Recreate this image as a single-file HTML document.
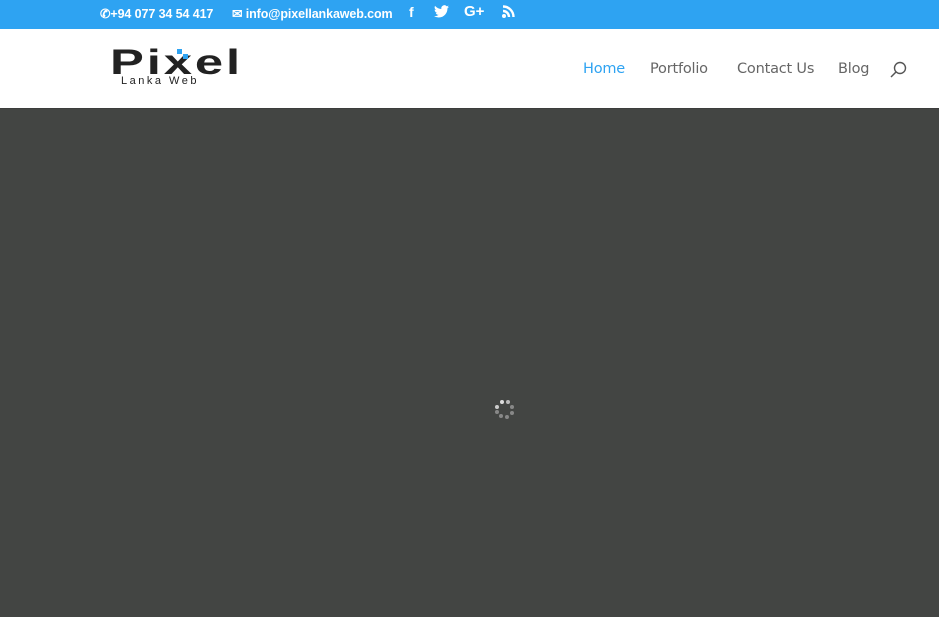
<!DOCTYPE html>
<html><head><meta charset="utf-8"><style>
body{margin:0;width:939px;height:617px;overflow:hidden;background:#434543;font-family:"Liberation Sans",sans-serif}
#top{position:absolute;left:0;top:0;width:939px;height:29px;background:#2ea3f2;color:#fff;font-size:12.5px;font-weight:bold;letter-spacing:-0.1px}
#top span{position:absolute;top:6px}
#hdr{position:absolute;left:0;top:29px;width:939px;height:79px;background:#fff;box-shadow:0 1px 0 rgba(0,0,0,.1)}
.nav{position:absolute;top:32px;font-size:14.5px;color:#666;font-family:"DejaVu Sans","Liberation Sans",sans-serif;letter-spacing:-0.2px}
.dot{position:absolute;width:4px;height:4px;border-radius:2px;background:#888}
</style></head><body>
<div id="top">
<span style="left:100px">&#9990;+94 077 34 54 417</span>
<span style="left:232px">&#9993; info@pixellankaweb.com</span>
<span style="left:409px;font-size:14px;top:4px">f</span>
<span style="left:434px;top:5px"><svg width="15" height="13" viewBox="0 0 24 20"><path fill="#fff" d="M24 2.4a10 10 0 0 1-2.8.8A5 5 0 0 0 23.3.4a10 10 0 0 1-3.1 1.2A4.9 4.9 0 0 0 11.8 6 14 14 0 0 1 1.7.9a4.9 4.9 0 0 0 1.5 6.6 4.9 4.9 0 0 1-2.2-.6 4.9 4.9 0 0 0 3.9 4.9 4.9 4.9 0 0 1-2.2.1 4.9 4.9 0 0 0 4.6 3.4A9.9 9.9 0 0 1 0 17.3 14 14 0 0 0 7.5 19.5c9 0 14-7.5 14-14v-.6A10 10 0 0 0 24 2.4z"/></svg></span>
<span style="left:464px;top:3px;font-size:15px">G+</span>
<span style="left:502px;top:5px"><svg width="13" height="13" viewBox="0 0 13 13"><circle cx="2" cy="11" r="2" fill="#fff"/><path d="M1 6a6 6 0 0 1 6 6M1 1.5a10.5 10.5 0 0 1 10.5 10.5" stroke="#fff" stroke-width="2.4" fill="none"/></svg></span>
</div>
<div id="hdr">
<div style="position:absolute;left:110px;top:19px;font-size:35px;font-weight:bold;color:#222;letter-spacing:2px;line-height:30px;transform:scaleX(1.45);transform-origin:left">Pixel</div>
<div style="position:absolute;left:177px;top:20px;width:5px;height:5px;background:#2ea3f2"></div>
<div style="position:absolute;left:183px;top:25px;width:5px;height:5px;background:#2ea3f2"></div>
<div style="position:absolute;left:121px;top:46px;font-size:11px;color:#222;letter-spacing:2.5px">Lanka Web</div>
<div class="nav" style="left:583px;color:#2ea3f2">Home</div>
<div class="nav" style="left:650px">Portfolio</div>
<div class="nav" style="left:737px">Contact Us</div>
<div class="nav" style="left:838px">Blog</div>
<svg style="position:absolute;left:890px;top:32px" width="17" height="17" viewBox="0 0 17 17"><circle cx="10" cy="7" r="5.5" stroke="#555" stroke-width="1.4" fill="none"/><path d="M6 11l-5 5" stroke="#555" stroke-width="1.5"/></svg>
</div>
<div class="dot" style="left:495px;top:405px;background:#ccc"></div>
<div class="dot" style="left:500px;top:400px;background:#ddd"></div>
<div class="dot" style="left:506px;top:400px;background:#bbb"></div>
<div class="dot" style="left:510px;top:405px"></div>
<div class="dot" style="left:510px;top:411px"></div>
<div class="dot" style="left:505px;top:415px"></div>
<div class="dot" style="left:499px;top:414px"></div>
<div class="dot" style="left:495px;top:410px"></div>
</body></html>
